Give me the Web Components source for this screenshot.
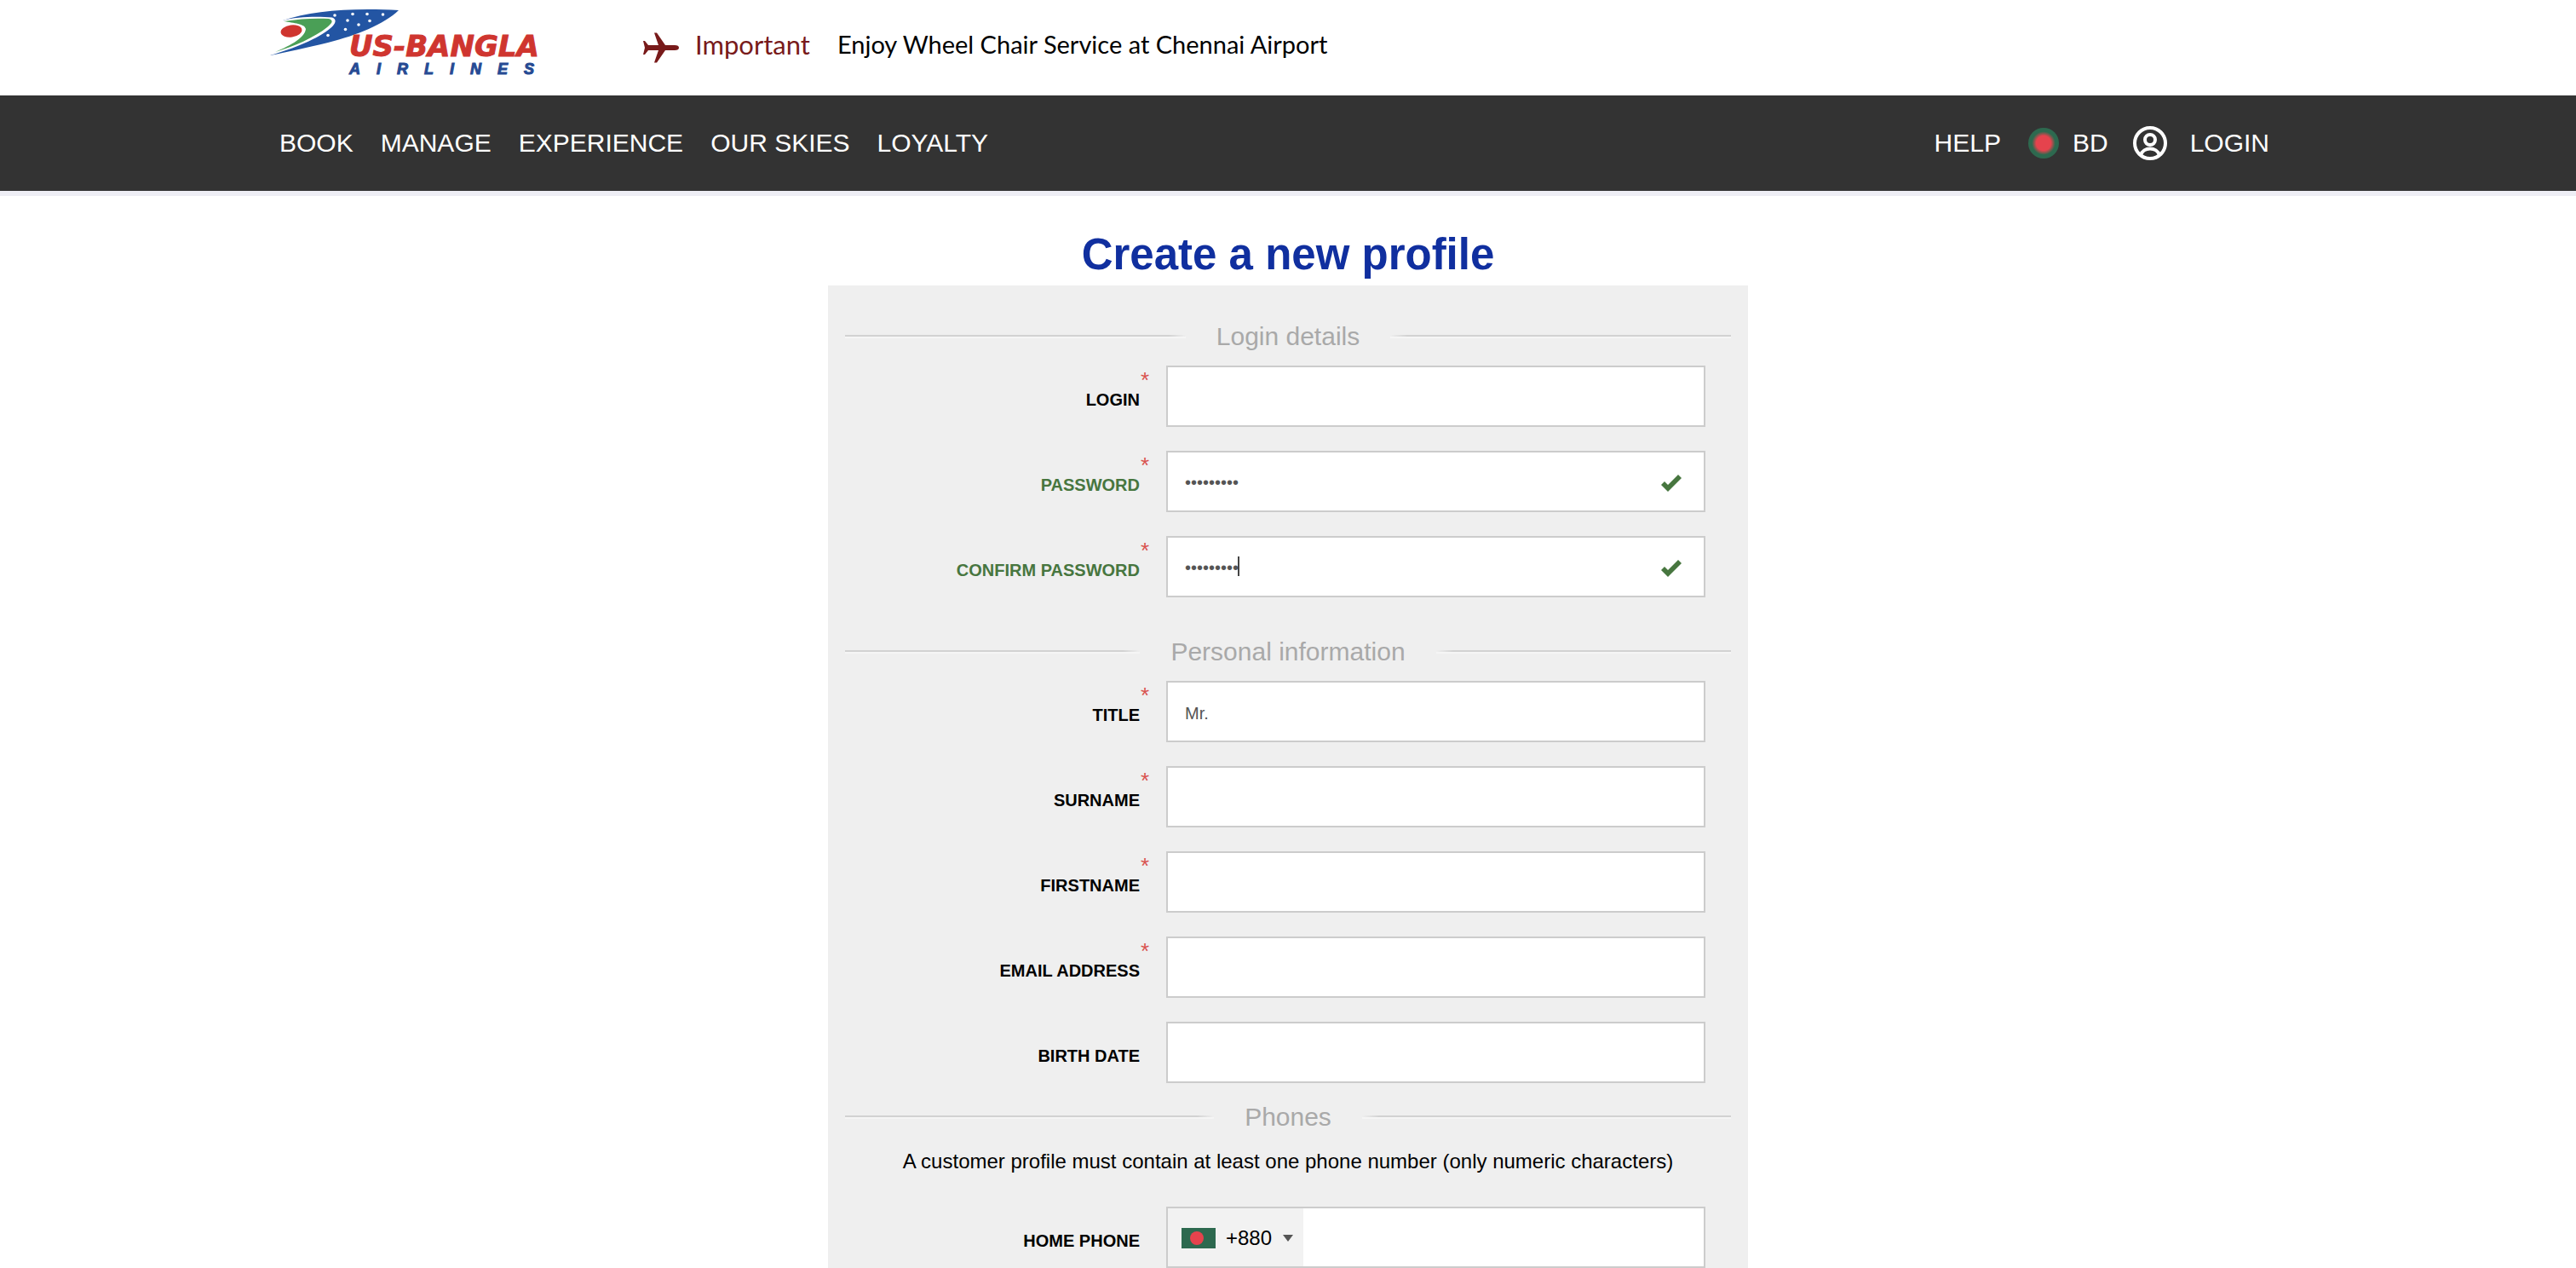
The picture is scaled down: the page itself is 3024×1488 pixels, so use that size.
<!DOCTYPE html>
<html lang="en">
<head>
<meta charset="utf-8">
<title>US-Bangla Airlines - Create a new profile</title>
<style>
body{margin:0;background:#fff;color:#000;font-family:"Liberation Sans",Arial,sans-serif}
</style>
</head>
<body>
<usb-page></usb-page>
<script>
const define=(name,html,setup)=>customElements.define(name,class extends HTMLElement{
  constructor(){super();this.attachShadow({mode:'open'})}
  connectedCallback(){
    this.shadowRoot.innerHTML=html;
    if(setup)setup(this,this.shadowRoot);
  }
});

define('usb-logo',`<style>:host{display:block}svg{display:block;overflow:visible}a{display:block}</style>
<a href="#" aria-label="US-Bangla Airlines home"><svg width="370" height="110" viewBox="300 0 370 110">
<path fill="#2355a3" d="M332 24C365 13 410 9 468 12C450 29 420 41 385 50C360 56 338 61 317 65C322 55 328 40 332 24Z"/>
<path fill="#fff" d="M331 24C350 19 375 19 390 20.500C396 23 394 28 388 33C374 45 345 57 317 65L316 25Z"/>
<path fill="#4a9f56" d="M333 25C352 22 370 21 386 22C392 24 390 27 384 32C369 44 346 54 323 61C342 53 358 44 359 34C358 28 345 27 333 25Z"/>
<ellipse cx="342" cy="36.500" rx="12.500" ry="7" fill="#cf352f" transform="rotate(-8 342 36.500)"/>
<g fill="#fff"><circle cx="393" cy="18" r="1.800"/><circle cx="414" cy="16.500" r="1.800"/><circle cx="431" cy="16.500" r="1.800"/><circle cx="449.500" cy="17" r="1.800"/><circle cx="408" cy="24" r="1.800"/><circle cx="434" cy="24.500" r="1.800"/><circle cx="421" cy="29" r="1.800"/><circle cx="405.500" cy="34.500" r="1.800"/><circle cx="385" cy="41.500" r="1.800"/></g>
<text x="410" y="66" font-family="DejaVu Sans" font-weight="bold" font-style="italic" font-size="34" fill="#cf352f" stroke="#cf352f" stroke-width="1">US-BANGLA</text>
<text x="410" y="87" font-family="Liberation Sans" font-weight="bold" font-style="italic" font-size="18" letter-spacing="19" fill="#264a93" stroke="#264a93" stroke-width="1">AIRLINES</text>
</svg></a>`);

define('usb-notice',`<style>
:host{display:flex;align-items:center;font:29px/36px Lato,sans-serif;padding-bottom:8px}
svg{display:block;margin:8px 18px 0 0}
b{font-weight:400;font-size:31px;color:#781a1a;margin-right:32px}
</style>
<svg width="44" height="36" viewBox="0 0 44 36" fill="#781a1a"><path d="M14 .5h3L27 15h11q5 0 5 3t-5 3H27L17 35.500h-3L19 21H7l-4 5H1l2-8-2-8h2l4 5h12z"/></svg>
<b>Important</b><slot></slot>`);

define('usb-nav',`<style>
:host{display:block;background:#333;border-bottom:6px solid #eeeef5}
nav{display:flex;align-items:center;height:112px;max-width:2336px;margin:auto;padding-right:32px;font-size:30px;line-height:36px}
a{color:#fff;text-decoration:none;white-space:nowrap;display:flex;align-items:center}
.main{display:flex;gap:32px;flex:1}
.side{display:flex;align-items:center}
.country{margin:0 29px 0 32px;gap:16px}.login{gap:27px}
svg{display:block}
</style>
<nav aria-label="Main"><div class="main"><a href="#">BOOK</a><a href="#">MANAGE</a><a href="#">EXPERIENCE</a><a href="#">OUR SKIES</a><a href="#">LOYALTY</a></div>
<div class="side"><a href="#">HELP</a>
<a class="country" href="#"><svg width="36" height="36" viewBox="0 0 36 36"><defs><radialGradient id="g"><stop offset=".48" stop-color="#e5434d"/><stop offset=".76" stop-color="#2d694f"/></radialGradient></defs><circle cx="18" cy="18" r="18" fill="url(#g)"/></svg>BD</a>
<a class="login" href="#"><svg width="40" height="40" viewBox="0 0 40 40" fill="none" stroke="#fff" stroke-width="4"><circle cx="20" cy="20" r="18"/><circle cx="20" cy="16" r="6"/><path d="M9 34C12 24 28 24 31 34"/></svg>LOGIN</a></div></nav>`);

define('usb-legend',`<style>
:host{display:block;margin-bottom:16px}
h2{display:flex;align-items:center;gap:36px;margin:0;font-weight:400;font-size:30px;line-height:36px;color:#a9a9a9}
h2::before,h2::after{content:"";flex:1;height:2px;border-bottom:2px solid #f5f5f5;background:linear-gradient(to right,#d2d2d2 calc(100% - 20px),#efefef)}
h2::after{background:linear-gradient(to left,#d2d2d2 calc(100% - 20px),#efefef)}
</style><h2><slot></slot></h2>`);

define('usb-field',`<style>
:host{display:grid;grid-template-columns:346fr 633fr;gap:31px;padding-right:30px}
:host([valid]){color:#47763f}
label{justify-self:end;position:relative;margin-top:28px;font-weight:700;font-size:20px;line-height:24px}
label i{position:absolute;left:100%;top:-25px;padding-left:1px;font:26px/28px "Liberation Sans",sans-serif;color:#d9534f}
.box{position:relative;display:flex;align-items:center;height:72px;box-sizing:border-box;border:2px solid #ccc;background:#fff}
input{flex:1;min-width:0;align-self:stretch;border:0;outline:0;background:none;padding:4px 20px 0;font:20px "Liberation Sans",sans-serif;color:#555}
input[type=password]{padding-top:2px}
.check{margin:4px 26px 0 0;display:block}
.caret{position:absolute;left:82px;top:22px;width:2px;height:23px;background:#444}
.code{display:flex;align-items:center;align-self:stretch;padding:2px 12px 0 16px;background:#f2f2f2}
.code svg{display:block}
select{appearance:none;border:0;padding:0;margin:0 12px;background:none;font:24px/32px "Liberation Sans",sans-serif;color:#000}
</style>
<label for="f"></label><div class="box"><input id="f"></div>`,(el,root)=>{
  const label=root.querySelector('label'),box=root.querySelector('.box'),input=root.querySelector('input');
  label.textContent=el.getAttribute('label');
  if(el.hasAttribute('required')){
    const star=document.createElement('i');star.textContent='*';label.append(star);
  }
  input.type=el.getAttribute('type')||'text';
  input.value=el.getAttribute('value')||'';
  if(el.hasAttribute('valid'))box.insertAdjacentHTML('beforeend','<svg class="check" width="24" height="20" viewBox="0 0 24 20"><path fill="#47763f" d="M0 12l4-4 4 4L20 0l4 4L8 20z"/></svg>');
  if(el.hasAttribute('caret'))box.insertAdjacentHTML('beforeend','<span class="caret"></span>');
  if(el.hasAttribute('dial-code'))box.insertAdjacentHTML('afterbegin',`<div class="code"><svg width="40" height="24"><rect width="40" height="24" fill="#2d694f"/><circle cx="18" cy="12" r="8" fill="#e5434d"/></svg><select aria-label="Country code"><option>${el.getAttribute('dial-code')}</option></select><svg width="12" height="8"><path fill="#555" d="M0 0h12L6 8z"/></svg></div>`);
});

define('usb-section',`<style>
:host{display:block}
.rows{display:grid;gap:28px}
</style><usb-legend></usb-legend><slot name="note"></slot><div class="rows"><slot></slot></div>`,(el,root)=>{
  root.querySelector('usb-legend').textContent=el.getAttribute('heading');
});

define('usb-page',`<style>
:host{display:block}
header{display:flex;align-items:center;height:112px;max-width:2424px;margin:auto}
usb-logo{align-self:start;margin-right:84px}
h1{margin:0;padding:39px 0 6px;text-align:center;font-size:51px;line-height:60px;color:#102f9f}
form{box-sizing:border-box;max-width:1080px;margin:auto;padding:42px 20px 0;background:#efefef}
.personal{margin-top:46px}.phones{margin-top:22px}
p{margin:18px 0 37px;text-align:center;font-size:24px;line-height:32px}
</style>
<header><usb-logo></usb-logo><usb-notice>Enjoy Wheel Chair Service at Chennai Airport</usb-notice></header>
<usb-nav></usb-nav>
<main><h1>Create a new profile</h1>
<form>
<usb-section heading="Login details">
<usb-field label="LOGIN" required></usb-field>
<usb-field label="PASSWORD" type="password" value="skyline24" required valid></usb-field>
<usb-field label="CONFIRM PASSWORD" type="password" value="skyline24" required valid caret></usb-field>
</usb-section>
<usb-section class="personal" heading="Personal information">
<usb-field label="TITLE" value="Mr." required></usb-field>
<usb-field label="SURNAME" required></usb-field>
<usb-field label="FIRSTNAME" required></usb-field>
<usb-field label="EMAIL ADDRESS" type="email" required></usb-field>
<usb-field label="BIRTH DATE"></usb-field>
</usb-section>
<usb-section class="phones" heading="Phones">
<p slot="note">A customer profile must contain at least one phone number (only numeric characters)</p>
<usb-field label="HOME PHONE" type="tel" dial-code="+880"></usb-field>
</usb-section>
</form></main>`);
</script>
</body>
</html>
